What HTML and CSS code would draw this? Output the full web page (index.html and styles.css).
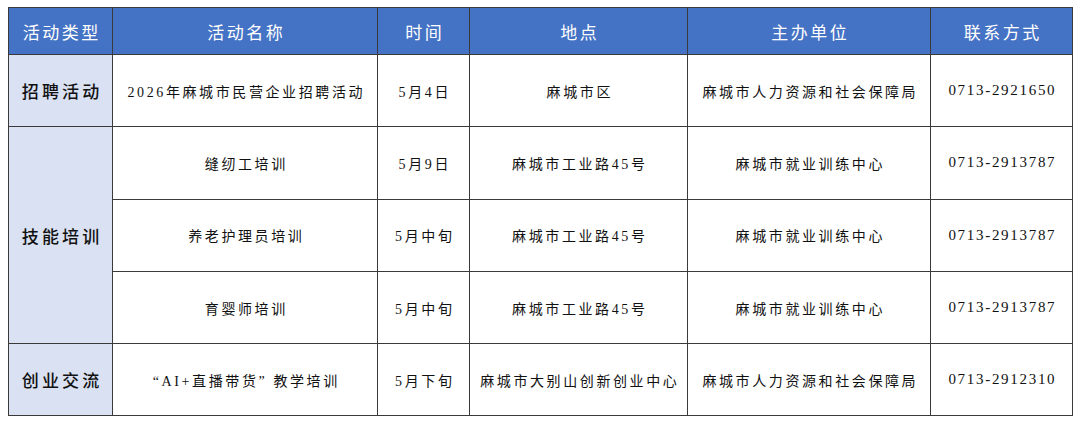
FILE: index.html
```html
<!DOCTYPE html>
<html lang="zh-CN">
<head>
<meta charset="utf-8">
<title>活动安排</title>
<link rel="stylesheet" href="styles.css">
</head>
<body>
<div class="wrap">
<table class="schedule">
  <colgroup>
    <col class="c-type">
    <col class="c-name">
    <col class="c-time">
    <col class="c-place">
    <col class="c-org">
    <col class="c-phone">
  </colgroup>
  <thead>
    <tr class="head-row">
      <th>活动类型</th>
      <th>活动名称</th>
      <th>时间</th>
      <th>地点</th>
      <th>主办单位</th>
      <th>联系方式</th>
    </tr>
  </thead>
  <tbody>
    <tr class="row">
      <td class="type">招聘活动</td>
      <td>2026年麻城市民营企业招聘活动</td>
      <td>5月4日</td>
      <td>麻城市区</td>
      <td>麻城市人力资源和社会保障局</td>
      <td class="phone">0713-2921650</td>
    </tr>
    <tr class="row">
      <td class="type" rowspan="3">技能培训</td>
      <td>缝纫工培训</td>
      <td>5月9日</td>
      <td>麻城市工业路45号</td>
      <td>麻城市就业训练中心</td>
      <td class="phone">0713-2913787</td>
    </tr>
    <tr class="row">
      <td>养老护理员培训</td>
      <td>5月中旬</td>
      <td>麻城市工业路45号</td>
      <td>麻城市就业训练中心</td>
      <td class="phone">0713-2913787</td>
    </tr>
    <tr class="row">
      <td>育婴师培训</td>
      <td>5月中旬</td>
      <td>麻城市工业路45号</td>
      <td>麻城市就业训练中心</td>
      <td class="phone">0713-2913787</td>
    </tr>
    <tr class="row">
      <td class="type">创业交流</td>
      <td>“AI+直播带货” 教学培训</td>
      <td>5月下旬</td>
      <td>麻城市大别山创新创业中心</td>
      <td>麻城市人力资源和社会保障局</td>
      <td class="phone">0713-2912310</td>
    </tr>
  </tbody>
</table>
</div>
</body>
</html>
```
FILE: styles.css
```css
html, body {
  background: #ffffff;
}
body {
  margin: 0;
  font-family: "Liberation Serif", "Noto Sans CJK SC", serif;
  color: #111111;
}
.wrap {
  padding: 7px 8px;
  width: 1064px;
}
.schedule {
  width: 1064px;
  border-collapse: collapse;
  table-layout: fixed;
}
.c-type { width: 104px; }
.c-name { width: 265px; }
.c-time { width: 92px; }
.c-place { width: 218px; }
.c-org { width: 243px; }
.c-phone { width: 142px; }

.schedule th,
.schedule td {
  border: 1.5px solid #3a3a3a;
  text-align: center;
  vertical-align: middle;
  padding: 0;
}
.head-row {
  height: 47px;
}
.head-row th {
  background: #4472c4;
  color: #ffffff;
  font-family: "Noto Sans CJK SC", sans-serif;
  font-weight: 400;
  font-size: 17px;
  letter-spacing: 2.5px;
  text-indent: 2.5px;
}
.row {
  height: 72.3px;
}
.row td {
  font-size: 14px;
  letter-spacing: 2.6px;
  text-indent: 2.6px;
}
.row td.type {
  background: #d9e1f3;
  font-family: "Noto Sans CJK SC", sans-serif;
  font-weight: 500;
  font-size: 17px;
  letter-spacing: 3.2px;
  text-indent: 3.2px;
}
.row td.phone {
  font-size: 15px;
  letter-spacing: 1.7px;
  text-indent: 1.7px;
}
```
